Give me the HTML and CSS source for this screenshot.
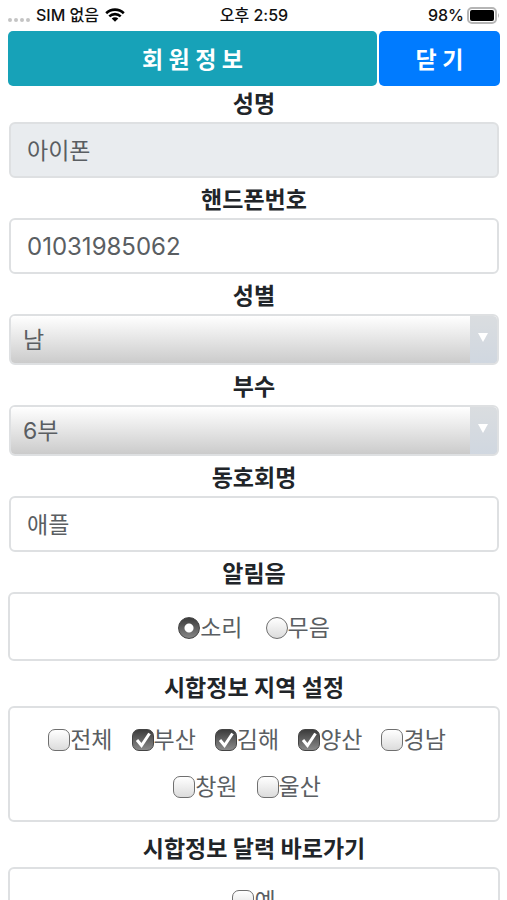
FILE: index.html
```
<!DOCTYPE html>
<html lang="ko">
<head>
<meta charset="utf-8">
<meta name="viewport" content="width=device-width, initial-scale=1">
<title>회원정보</title>
<link rel="stylesheet" href="styles.css">
</head>
<body>
<header class="status">
  <div class="status-left">
    <span class="dots"><i></i><i></i><i></i><i></i></span>
    <span>SIM 없음</span>
    <svg class="wifi" viewBox="0 0 20 14" aria-hidden="true">
      <path d="M1.2 5.2a12.6 12.6 0 0 1 17.6 0M4.3 8.4a8.2 8.2 0 0 1 11.4 0" fill="none" stroke="#000" stroke-width="2.6"/>
      <path d="M10 13.8 6.7 10.5a4.7 4.7 0 0 1 6.600 0z"/>
    </svg>
  </div>
  <div class="status-time">오후 2:59</div>
  <div class="status-right">
    <span>98%</span>
    <svg class="battery" viewBox="0 0 33 17" aria-hidden="true">
      <rect x="1" y="1" width="28" height="15" rx="4" fill="#fff" stroke="#b5b5b5" stroke-width="2"/>
      <rect x="3" y="3" width="24" height="11" rx="2"/>
      <path d="M31 6q2 2.500 0 5z" fill="#b5b5b5"/>
    </svg>
  </div>
</header>
<main>
  <div class="toolbar">
    <button type="button" class="btn btn-info">회 원 정 보</button>
    <button type="button" class="btn btn-close">닫 기</button>
  </div>
  <form class="form">
    <label class="title title-first" for="name">성명</label>
    <input class="control" id="name" type="text" value="아이폰" readonly>
    <label class="title" for="phone">핸드폰번호</label>
    <input class="control" id="phone" type="tel" value="01031985062">
    <label class="title" for="gender">성별</label>
    <div class="select"><select id="gender"><option>남</option></select></div>
    <label class="title" for="grade">부수</label>
    <div class="select"><select id="grade"><option>6부</option></select></div>
    <label class="title" for="club">동호회명</label>
    <input class="control" id="club" type="text" value="애플">

    <h2 class="title" id="t-sound">알림음</h2>
    <div class="box box-radio" role="group" aria-labelledby="t-sound">
      <label class="choice"><input type="radio" name="sound" checked><span>소리</span></label>
      <label class="choice"><input type="radio" name="sound"><span>무음</span></label>
    </div>

    <h2 class="title title-tall" id="t-region">시합정보 지역 설정</h2>
    <div class="box box-region" role="group" aria-labelledby="t-region">
      <label class="choice"><input type="checkbox"><span>전체</span></label>
      <label class="choice"><input type="checkbox" checked><span>부산</span></label>
      <label class="choice"><input type="checkbox" checked><span>김해</span></label>
      <label class="choice"><input type="checkbox" checked><span>양산</span></label>
      <label class="choice"><input type="checkbox"><span>경남</span></label>
      <label class="choice"><input type="checkbox"><span>창원</span></label>
      <label class="choice"><input type="checkbox"><span>울산</span></label>
    </div>

    <h2 class="title title-tall" id="t-calendar">시합정보 달력 바로가기</h2>
    <div class="box" role="group" aria-labelledby="t-calendar">
      <label class="choice"><input type="checkbox"><span>예</span></label>
    </div>
  </form>
</main>
</body>
</html>
```
FILE: styles.css
```
* { box-sizing: border-box; }

body {
  margin: 0;
  background: #fff;
  color: #212529;
  font-family: Inter, "Noto Sans CJK KR", sans-serif;
  font-size: 23px;
}

body::-webkit-scrollbar { display: none; }

.status {
  display: grid;
  grid-template-columns: 1fr auto 1fr;
  align-items: center;
  height: 30px;
  padding: 0 7px 0 8px;
  color: #111;
  font-size: 16px;
  font-weight: 500;
  line-height: 28px;
}

.status-left,
.status-right { display: flex; align-items: center; }
.status-left { gap: 6px; }
.status-right { justify-content: flex-end; gap: 3px; }

.dots { display: flex; gap: 2px; padding-top: 10px; }
.dots i { width: 4px; height: 4px; border-radius: 50%; background: #c4c4c4; }

.wifi { width: 20px; height: 14px; }
.battery { width: 33px; height: 17px; }

main { padding: 1px 7px 8px 8px; }

.toolbar { display: grid; grid-template-columns: 1fr 121px; gap: 2px; }

.btn {
  height: 55px;
  padding: 0 0 2px;
  border: 0;
  border-radius: 5px;
  color: #fff;
  font: inherit;
  font-weight: 700;
}
.btn-info { background: #17a2b8; }
.btn-close { background: #007bff; }

.form { display: flex; flex-direction: column; }

.title {
  margin: 0;
  height: 40px;
  font-size: 23px;
  font-weight: 700;
  line-height: 45px;
  text-align: center;
}
.title-first { height: 36px; line-height: 37px; }
.title-tall { height: 45px; line-height: 54px; }

.control,
.select,
.box {
  border: 2px solid #dee0e2;
  border-radius: 6px;
  background: #fff;
  color: #5a5e62;
}

.control {
  height: 56px;
  margin: 0 1px;
  padding: 0 16px 2px;
  font: inherit;
}
.control[type="tel"] { padding-bottom: 0; font-size: 24px; }
.control:read-only { background: #e9ecef; }

.select {
  position: relative;
  height: 51px;
  margin: 0 1px;
  overflow: hidden;
}

.select select {
  width: 100%;
  height: 100%;
  padding: 0 40px 0 12px;
  border: 0;
  appearance: none;
  background: linear-gradient(#fff, #cbcbcb);
  color: inherit;
  font: inherit;
}

.select::before {
  content: "";
  position: absolute;
  inset: 0 0 0 auto;
  width: 27px;
  background: linear-gradient(#dadde0, #d0d7e0);
  pointer-events: none;
}

.select::after {
  content: "";
  position: absolute;
  top: 17px;
  right: 9px;
  border: 5px solid transparent;
  border-top: 9px solid #fff;
  border-bottom: 0;
  pointer-events: none;
}

.box {
  display: flex;
  flex-wrap: wrap;
  justify-content: center;
  column-gap: 19px;
  padding: 8px 12px;
}
.box-radio { padding: 10px 12px 8px; column-gap: 23px; }
.box-region { padding: 8px 40px 10px 26px; }

.choice { display: flex; align-items: center; height: 47px; }
.choice span { padding-bottom: 4px; }

.choice input {
  flex: none;
  width: 22px;
  height: 22px;
  margin: 0;
  border: 1px solid #6f6f6f;
  border-radius: 7px;
  appearance: none;
  background: linear-gradient(#fff, #dcdcdc);
}

.choice input[type="radio"] { border-radius: 50%; }

.choice input[type="radio"]:checked {
  border-color: #444;
  background: radial-gradient(circle, #fff 0 4px, transparent 5px), linear-gradient(#3c3c3c, #858585);
}

.choice input[type="checkbox"]:checked {
  border-color: #444;
  background:
    url("data:image/svg+xml,%3Csvg xmlns='http://www.w3.org/2000/svg' viewBox='0 0 20 20'%3E%3Cpath d='M4 10l4.500 5.500 8-12' fill='none' stroke='%23fff' stroke-width='3'/%3E%3C/svg%3E") center / 20px,
    linear-gradient(#3c3c3c, #8a8a8a);
}
```
